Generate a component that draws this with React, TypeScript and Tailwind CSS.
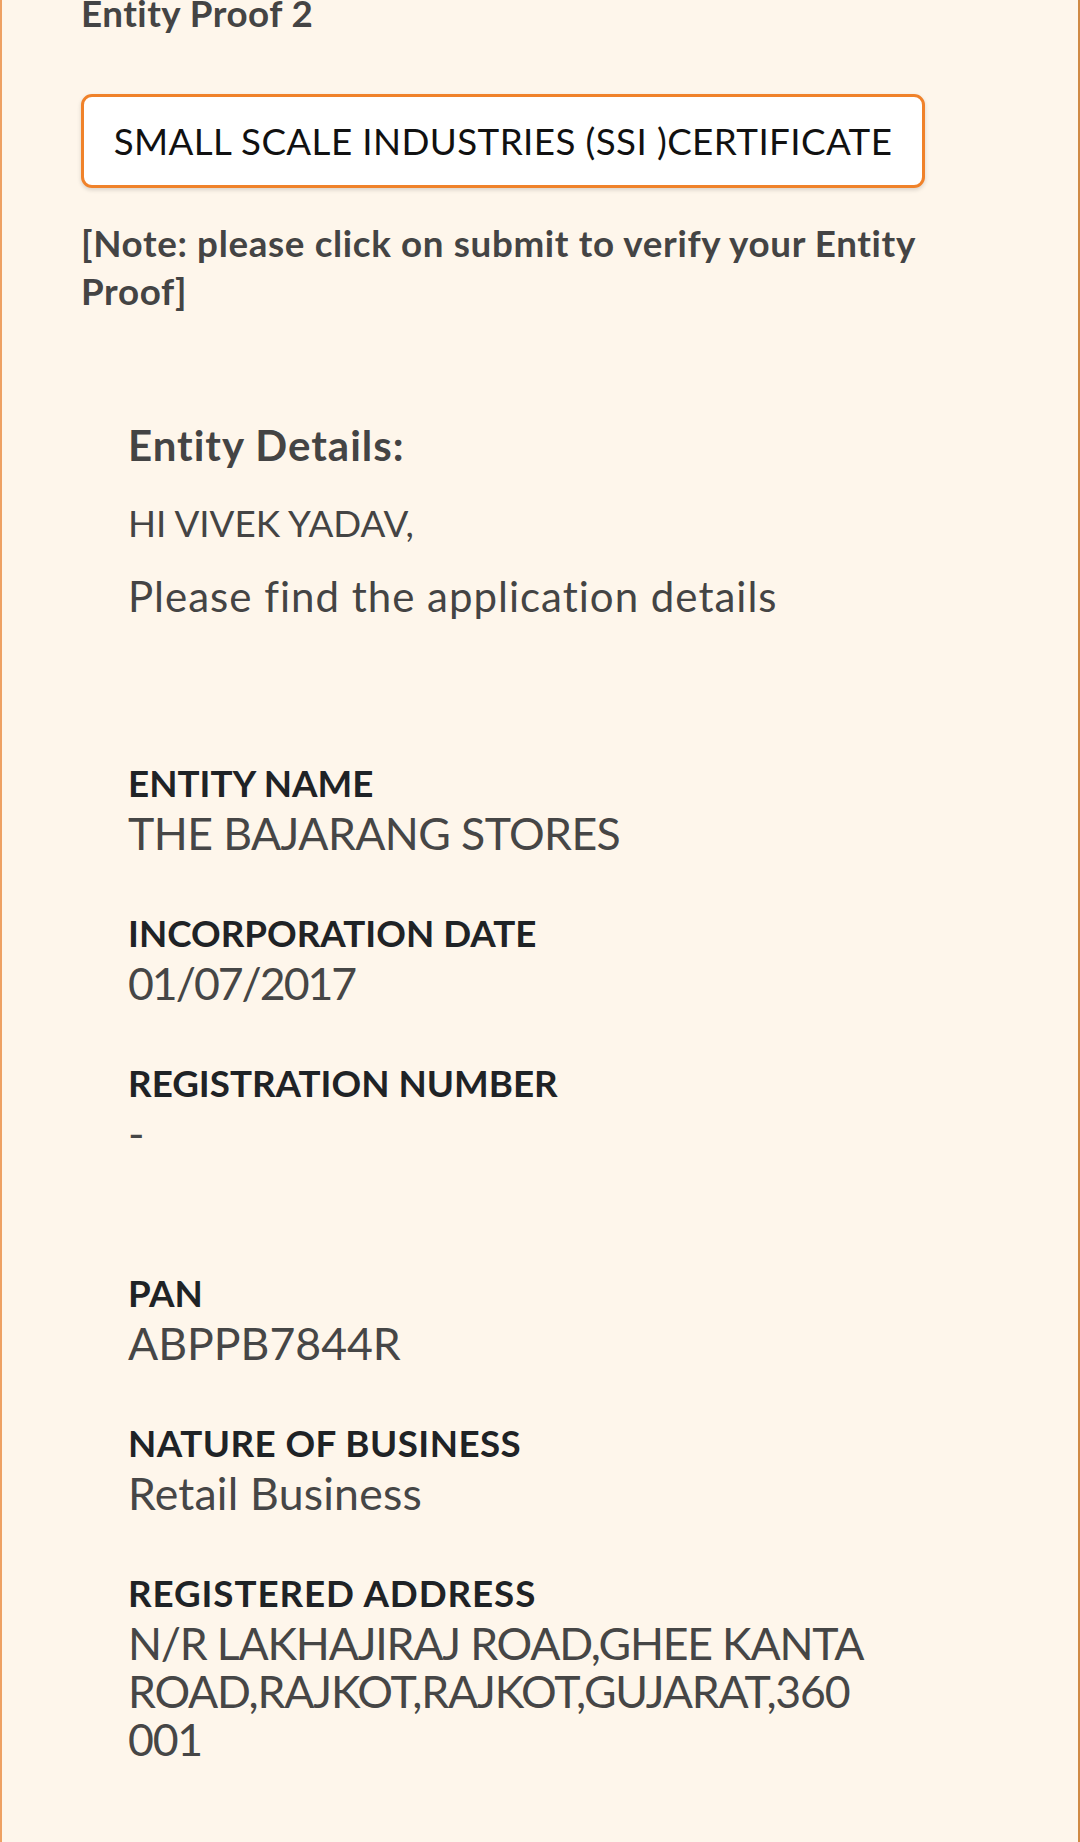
import React from "react";

const font = { fontFamily: "Lato, 'Noto Sans', sans-serif" } as const;

function Field({
  label,
  value,
  extra,
  lt,
  vt,
}: {
  label: string;
  value: React.ReactNode;
  extra?: boolean;
  lt: string;
  vt: string;
}) {
  return (
    <div className={extra ? "mb-[114px]" : "mb-[54px]"}>
      <div className={"text-[36.75px] leading-[44px] font-bold text-[#1f2326] " + lt}>{label}</div>
      <div className={"mt-[4px] text-[44.6px] leading-[48px] text-[#464646] " + vt}>{value}</div>
    </div>
  );
}

export default function App() {
  return (
    <div
      className="w-[1080px] h-[1842px] overflow-hidden bg-[#fef6eb] border-l-2 border-r-2 border-l-[#eea163] border-r-[#cf8a45]"
      style={font}
    >
      <div className="pl-[79px]">
        <div className="-mt-[11px] text-[36.75px] leading-[48px] font-bold text-[#444444] tracking-[0.5px]">Entity Proof 2</div>
        <div className="mt-[57px] w-[844px] h-[94px] flex items-center justify-center bg-white border-[3px] border-[#f0822a] rounded-[11px] shadow-[0_2px_4px_rgba(0,0,0,0.15)]">
          <span className="text-[36.75px] leading-[44px] text-[#111111] tracking-[0.4px]">SMALL SCALE INDUSTRIES (SSI )CERTIFICATE</span>
        </div>
        <div className="mt-[31px] text-[36.75px] leading-[48px] font-bold text-[#444444] tracking-[0.65px]">
          [Note: please click on submit to verify your Entity
          <br />
          Proof]
        </div>
      </div>

      <div className="pl-[126px] mt-[105px]">
        <div className="text-[42px] leading-[50px] font-bold text-[#444444] tracking-[1px]">Entity Details:</div>
        <div className="mt-[31px] text-[36.75px] leading-[44px] text-[#444444]">HI VIVEK YADAV,</div>
        <div className="mt-[26px] text-[42px] leading-[50px] text-[#444444] tracking-[1px]">Please find the application details</div>

        <div className="mt-[140px]">
          <Field label="ENTITY NAME" value="THE BAJARANG STORES" lt="tracking-[0px]" vt="tracking-[-0.6px]" />
          <Field label="INCORPORATION DATE" value="01/07/2017" lt="tracking-[0px]" vt="tracking-[-2px]" />
          <Field label="REGISTRATION NUMBER" value="-" extra lt="tracking-[0px]" vt="tracking-[0px]" />
          <Field label="PAN" value="ABPPB7844R" lt="tracking-[0px]" vt="tracking-[0px]" />
          <Field label="NATURE OF BUSINESS" value="Retail Business" lt="tracking-[0.45px]" vt="tracking-[0.2px]" />
          <Field
            label="REGISTERED ADDRESS"
            lt="tracking-[0.9px]"
            vt="tracking-[-1.2px]"
            value={
              <>
                N/R LAKHAJIRAJ ROAD,GHEE KANTA
                <br />
                ROAD,RAJKOT,RAJKOT,GUJARAT,360
                <br />
                001
              </>
            }
          />
        </div>
      </div>
    </div>
  );
}
